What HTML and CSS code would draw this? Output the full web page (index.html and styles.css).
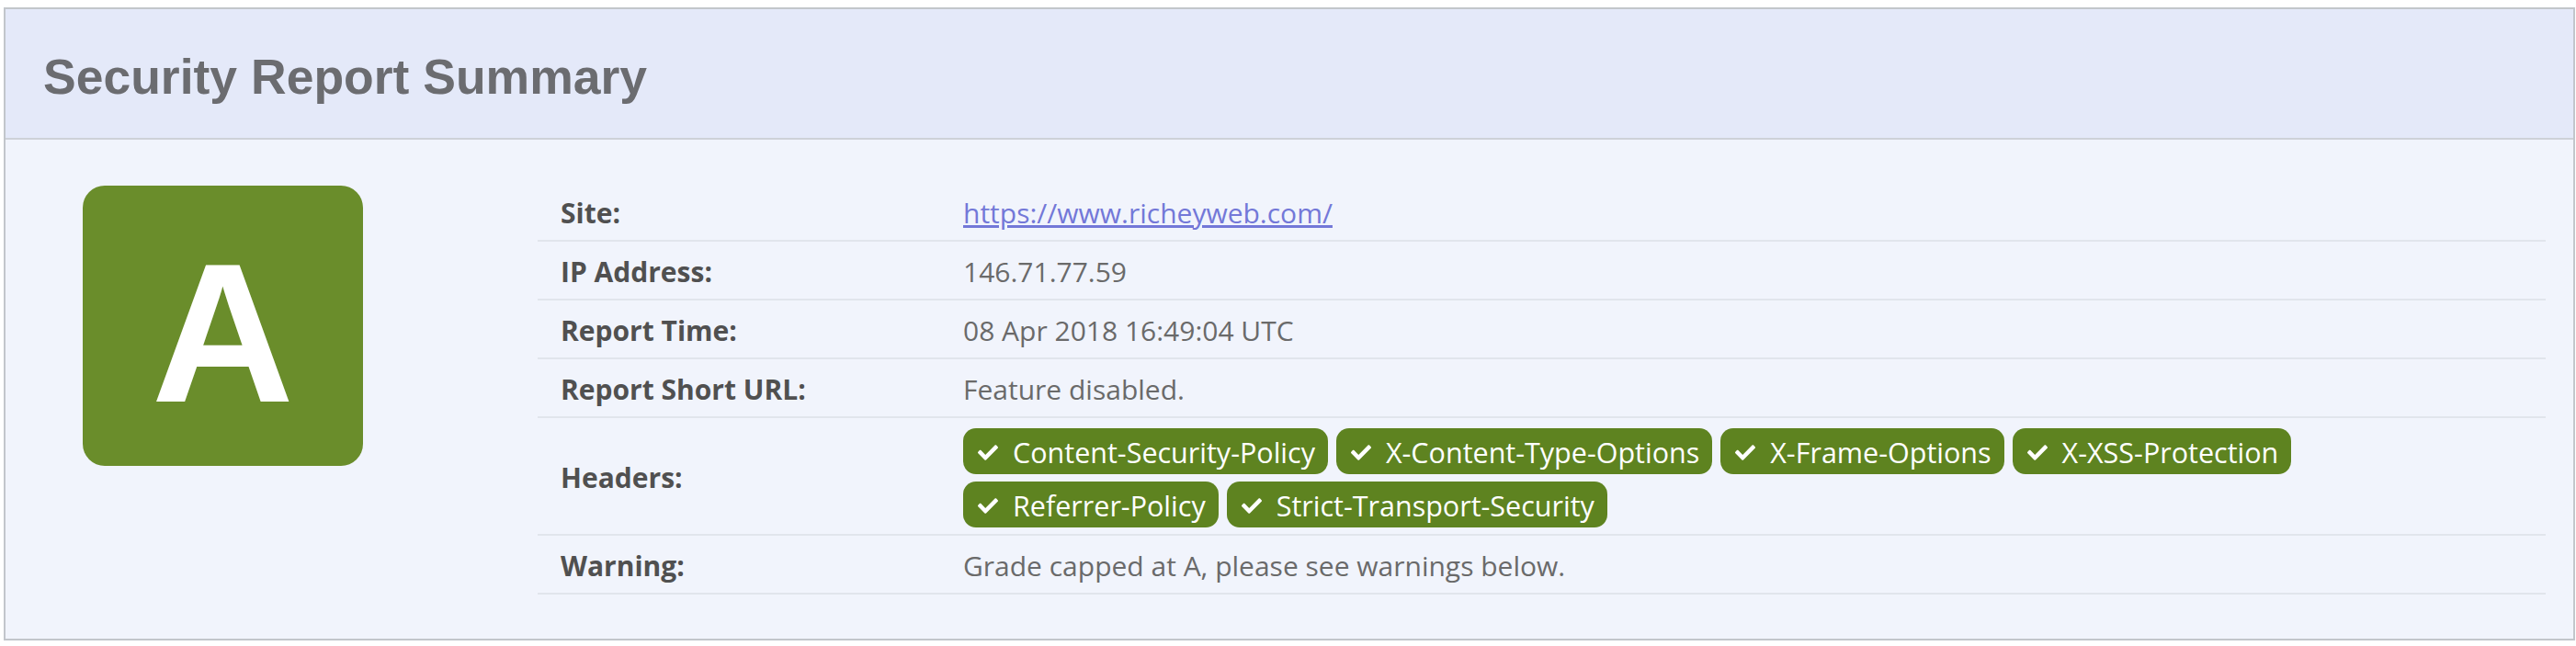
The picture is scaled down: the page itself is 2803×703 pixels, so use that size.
FILE: index.html
```html
<!DOCTYPE html>
<html lang="en">
<head>
<meta charset="utf-8">
<title>Security Report Summary</title>
<link rel="stylesheet" href="styles.css">
</head>
<body>
<section class="card">
  <header class="card-head">
    <h1 class="card-title">Security Report Summary</h1>
  </header>
  <div class="card-body">
    <div class="grade"><span class="grade-letter">A</span></div>
    <table class="report">
      <tbody>
        <tr>
          <th>Site:</th>
          <td><a class="site-link" href="#">https://www.richeyweb.com/</a></td>
        </tr>
        <tr>
          <th>IP Address:</th>
          <td>146.71.77.59</td>
        </tr>
        <tr>
          <th>Report Time:</th>
          <td>08 Apr 2018 16:49:04 UTC</td>
        </tr>
        <tr>
          <th>Report Short URL:</th>
          <td>Feature disabled.</td>
        </tr>
        <tr>
          <th>Headers:</th>
          <td>
            <div class="badges">
              <span class="badge"><svg class="tick" viewBox="0 60 512 392"><path d="M173.898 439.404l-166.4-166.4c-9.997-9.997-9.997-26.206 0-36.204l36.203-36.204c9.997-9.998 26.207-9.998 36.204 0L192 312.69 432.095 72.596c9.997-9.997 26.207-9.997 36.204 0l36.203 36.204c9.997 9.997 9.997 26.206 0 36.204l-294.4 294.401c-9.998 9.997-26.207 9.997-36.204-.001z"/></svg>Content-Security-Policy</span>
              <span class="badge"><svg class="tick" viewBox="0 60 512 392"><path d="M173.898 439.404l-166.4-166.4c-9.997-9.997-9.997-26.206 0-36.204l36.203-36.204c9.997-9.998 26.207-9.998 36.204 0L192 312.69 432.095 72.596c9.997-9.997 26.207-9.997 36.204 0l36.203 36.204c9.997 9.997 9.997 26.206 0 36.204l-294.4 294.401c-9.998 9.997-26.207 9.997-36.204-.001z"/></svg>X-Content-Type-Options</span>
              <span class="badge"><svg class="tick" viewBox="0 60 512 392"><path d="M173.898 439.404l-166.4-166.4c-9.997-9.997-9.997-26.206 0-36.204l36.203-36.204c9.997-9.998 26.207-9.998 36.204 0L192 312.69 432.095 72.596c9.997-9.997 26.207-9.997 36.204 0l36.203 36.204c9.997 9.997 9.997 26.206 0 36.204l-294.4 294.401c-9.998 9.997-26.207 9.997-36.204-.001z"/></svg>X-Frame-Options</span>
              <span class="badge"><svg class="tick" viewBox="0 60 512 392"><path d="M173.898 439.404l-166.4-166.4c-9.997-9.997-9.997-26.206 0-36.204l36.203-36.204c9.997-9.998 26.207-9.998 36.204 0L192 312.69 432.095 72.596c9.997-9.997 26.207-9.997 36.204 0l36.203 36.204c9.997 9.997 9.997 26.206 0 36.204l-294.4 294.401c-9.998 9.997-26.207 9.997-36.204-.001z"/></svg>X-XSS-Protection</span>
              <span class="badge"><svg class="tick" viewBox="0 60 512 392"><path d="M173.898 439.404l-166.4-166.4c-9.997-9.997-9.997-26.206 0-36.204l36.203-36.204c9.997-9.998 26.207-9.998 36.204 0L192 312.69 432.095 72.596c9.997-9.997 26.207-9.997 36.204 0l36.203 36.204c9.997 9.997 9.997 26.206 0 36.204l-294.4 294.401c-9.998 9.997-26.207 9.997-36.204-.001z"/></svg>Referrer-Policy</span>
              <span class="badge"><svg class="tick" viewBox="0 60 512 392"><path d="M173.898 439.404l-166.4-166.4c-9.997-9.997-9.997-26.206 0-36.204l36.203-36.204c9.997-9.998 26.207-9.998 36.204 0L192 312.69 432.095 72.596c9.997-9.997 26.207-9.997 36.204 0l36.203 36.204c9.997 9.997 9.997 26.206 0 36.204l-294.4 294.401c-9.998 9.997-26.207 9.997-36.204-.001z"/></svg>Strict-Transport-Security</span>
            </div>
          </td>
        </tr>
        <tr>
          <th>Warning:</th>
          <td>Grade capped at A, please see warnings below.</td>
        </tr>
      </tbody>
    </table>
  </div>
</section>
</body>
</html>
```

FILE: styles.css
```css
html, body {
  margin: 0;
  padding: 0;
  background: #ffffff;
}

body {
  font-family: "Open Sans", "DejaVu Sans", sans-serif;
}

.card {
  margin: 8px 1px 0 4px;
  border: 2px solid #c2c6cb;
  background: #f1f4fc;
}

.card-head {
  height: 142px;
  box-sizing: border-box;
  padding: 6px 0 0 41px;
  display: flex;
  align-items: center;
  background: #e4e9f9;
  border-bottom: 2px solid #cdd1d8;
}

.card-title {
  margin: 0;
  font-family: "Liberation Sans", Arial, sans-serif;
  font-weight: 700;
  font-size: 53.5px;
  line-height: normal;
  color: #6b6c70;
}

.card-body {
  display: flex;
  align-items: flex-start;
  padding: 47px 30px 48px 84px;
}

.grade {
  flex: 0 0 305px;
  height: 305px;
  margin-top: 3px;
  box-sizing: border-box;
  padding-top: 16px;
  border-radius: 24px;
  background: #6a8d2b;
  display: flex;
  align-items: center;
  justify-content: center;
}

.grade-letter {
  font-family: "Liberation Sans", Arial, sans-serif;
  font-weight: 700;
  font-size: 215px;
  line-height: 1;
  color: #ffffff;
}

.report {
  flex: 1;
  margin-left: 190px;
  border-collapse: collapse;
  font-size: 30px;
  line-height: 44px;
}

.report th,
.report td {
  padding: 11px 24px 7px;
  border-bottom: 2px solid #e1e5ec;
  text-align: left;
  vertical-align: middle;
}

.report th {
  width: 390px;
  padding-left: 25px;
  font-weight: 700;
  color: #505050;
  white-space: nowrap;
}

.report td {
  color: #6a6a6a;
}

.site-link {
  color: #7378d8;
  text-decoration: underline;
}

.badges {
  display: flex;
  flex-wrap: wrap;
  gap: 8px 9px;
}

.badge {
  display: inline-flex;
  align-items: center;
  height: 50px;
  box-sizing: border-box;
  padding: 2px 14px 0 16px;
  border-radius: 14px;
  background: #5e8320;
  color: #ffffff;
  font-size: 30.5px;
  line-height: 1;
  white-space: nowrap;
}

.tick {
  width: 22px;
  height: 17px;
  margin-right: 16px;
  fill: #ffffff;
  flex: 0 0 auto;
}
```
